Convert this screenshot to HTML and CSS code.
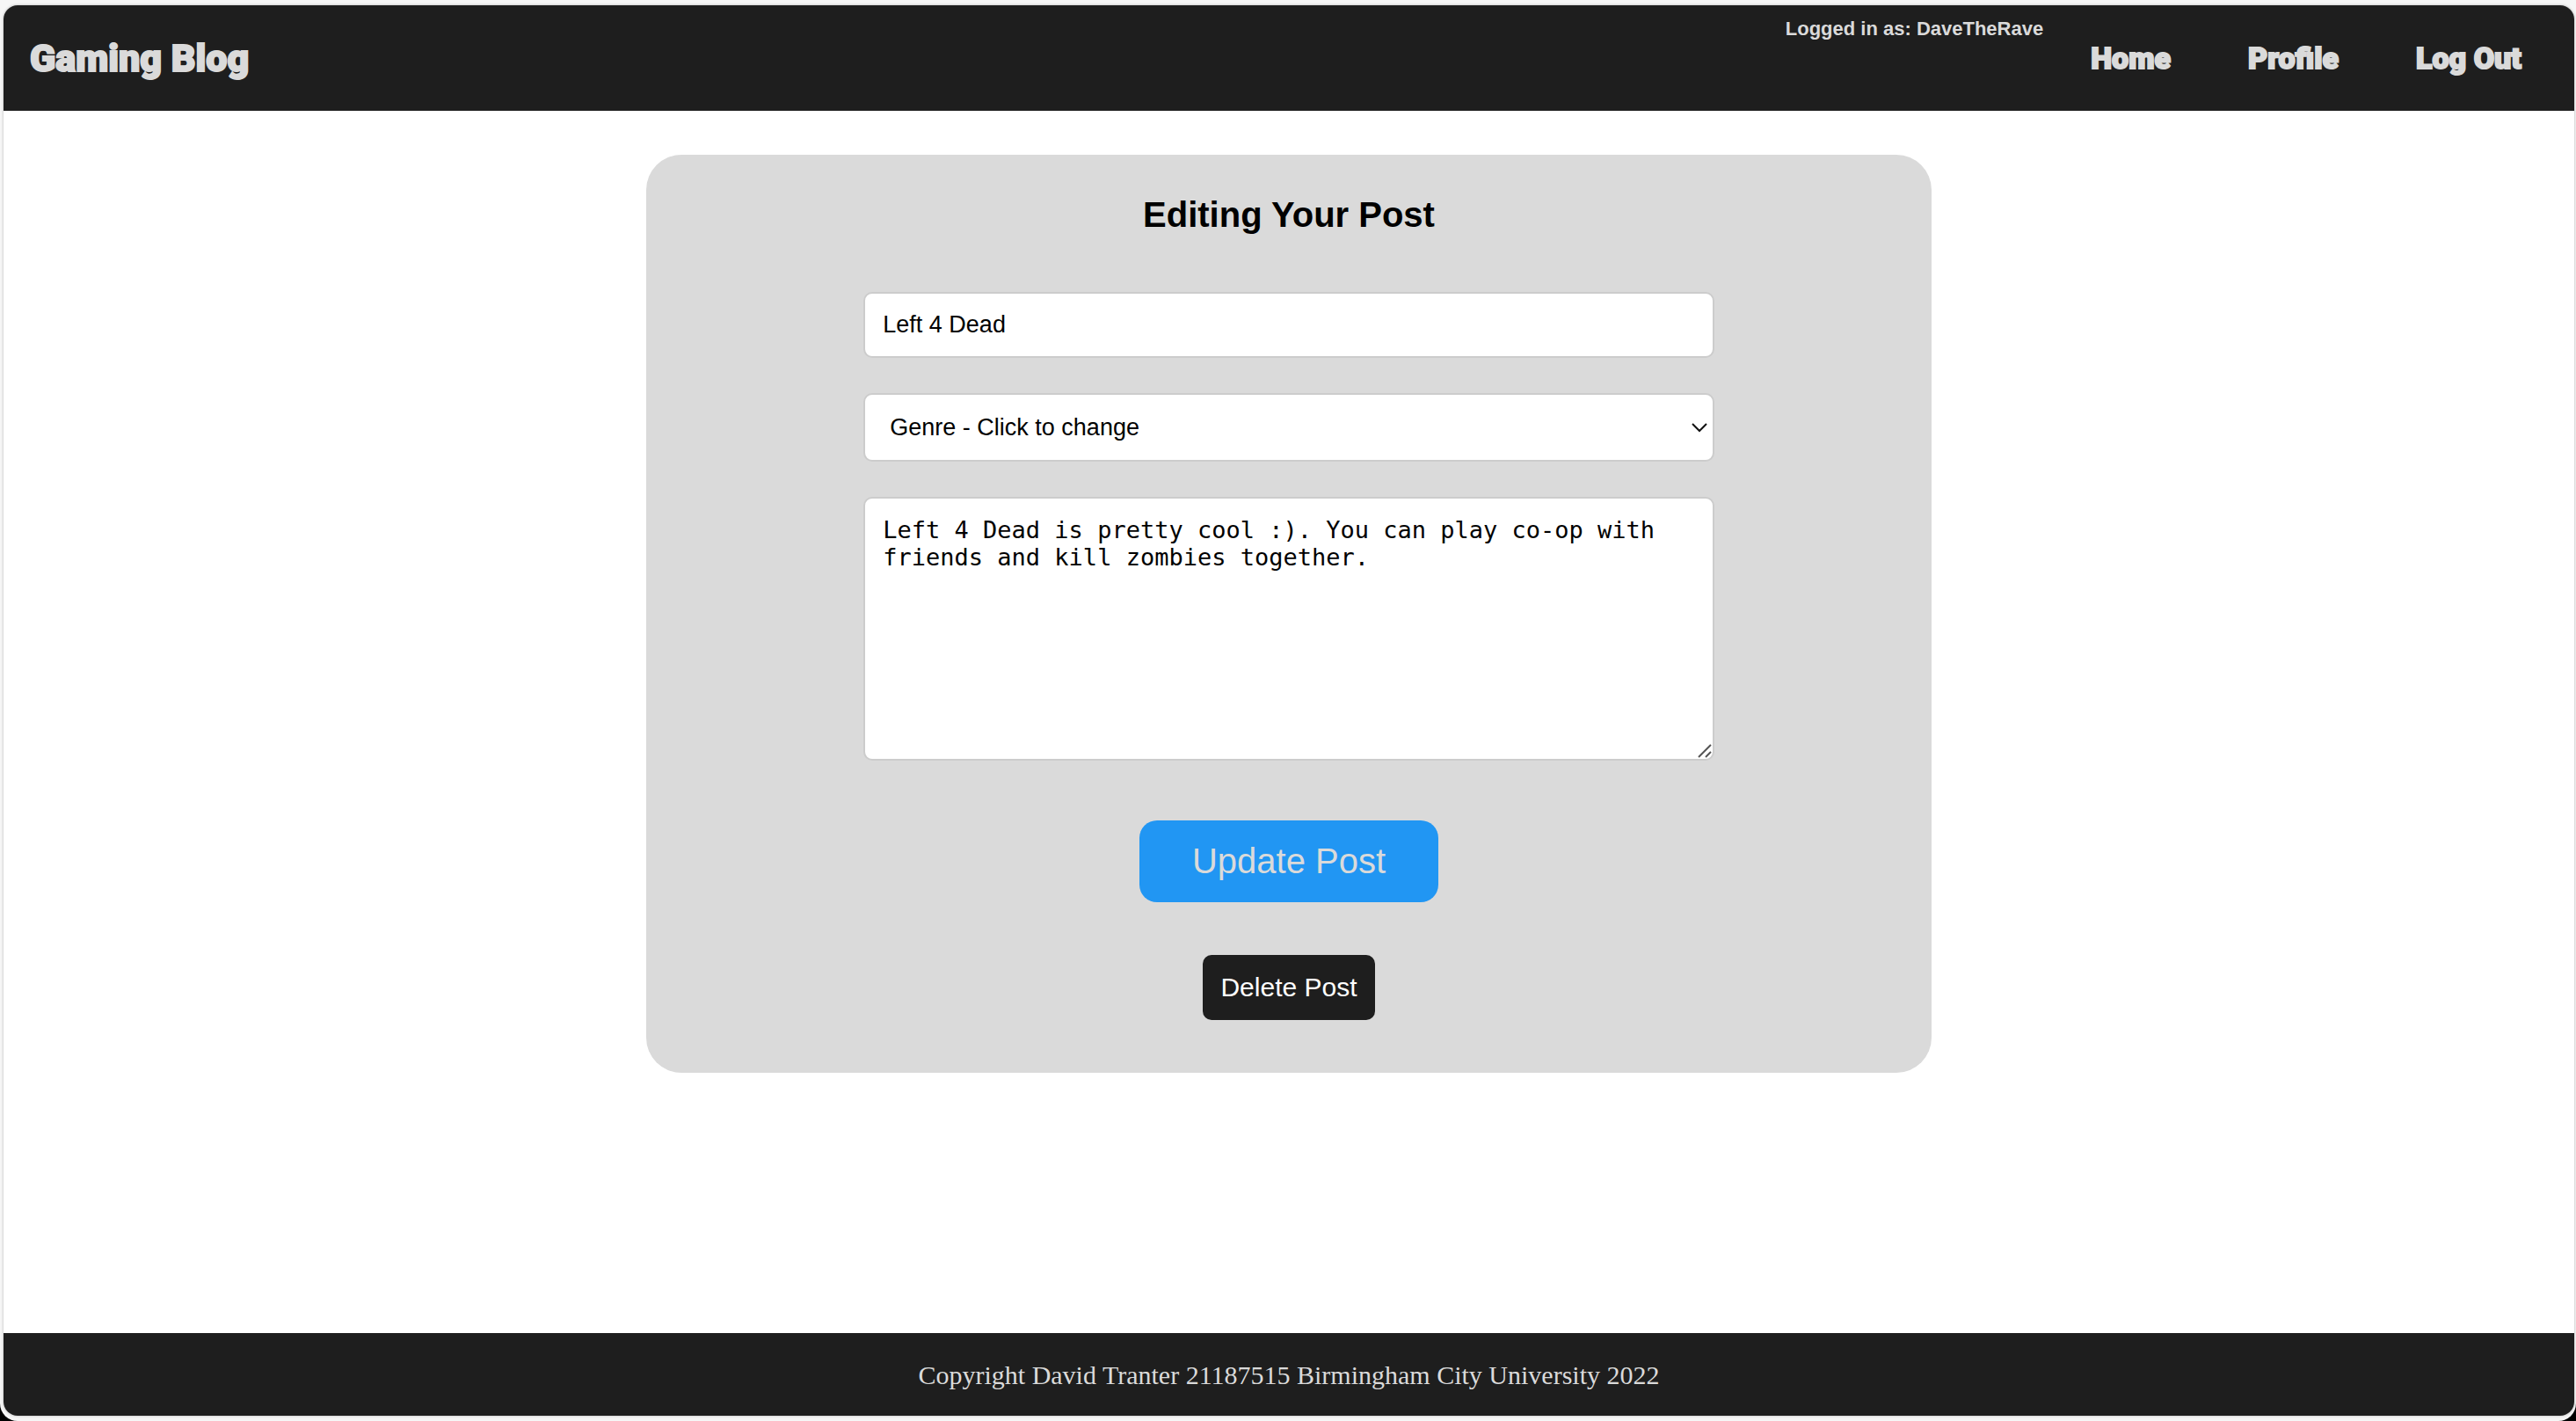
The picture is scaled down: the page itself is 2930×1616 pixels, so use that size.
FILE: index.html
```html
<!DOCTYPE html>
<html lang="en">
<head>
<meta charset="utf-8">
<title>Gaming Blog</title>
<link rel="stylesheet" href="styles.css">
</head>
<body>
<div class="frame">
  <div class="page">
    <header class="header">
      <a class="logo" href="#">Gaming Blog</a>
      <div class="account">
        <p class="status">Logged in as: DaveTheRave</p>
        <nav class="nav">
          <a href="#">Home</a>
          <a href="#">Profile</a>
          <a href="#">Log Out</a>
        </nav>
      </div>
    </header>
    <main class="main">
      <form class="card">
        <h1 class="title">Editing Your Post</h1>
        <input class="field" type="text" aria-label="Title" value="Left 4 Dead">
        <div class="control">
          <select class="field select" aria-label="Genre"><option>Genre - Click to change</option></select>
          <svg class="chevron" viewBox="0 0 18 12" aria-hidden="true"><path d="M1 2 L9 10 L17 2" fill="none" stroke="#111" stroke-width="2"/></svg>
        </div>
        <div class="control control-area">
          <textarea class="field area" aria-label="Post">Left 4 Dead is pretty cool :). You can play co-op with friends and kill zombies together.</textarea>
          <svg class="grip" viewBox="0 0 16 16" aria-hidden="true"><path d="M1 15 L15 1 M9 15 L15 9" fill="none" stroke="#555" stroke-width="2"/></svg>
        </div>
        <button class="update" type="submit">Update Post</button>
        <button class="delete" type="button">Delete Post</button>
      </form>
    </main>
    <footer class="footer">Copyright David Tranter 21187515 Birmingham City University 2022</footer>
  </div>
</div>
</body>
</html>
```
FILE: styles.css
```css
* { box-sizing: border-box; }
html { background: #000; }
body { margin: 0; font-family: "Liberation Sans", Arial, sans-serif; }
.frame {
  min-height: 100vh;
  padding: 6px 2px 6px 4px;
  background: #f6f6f6;
  border-radius: 0 0 20px 20px;
  display: flex;
}
.page {
  flex: 1;
  display: flex;
  flex-direction: column;
  background: #fff;
  border-radius: 16px;
  overflow: hidden;
  box-shadow: 0 0 3px rgba(0, 0, 0, 0.3);
}
.header {
  height: 120px;
  padding: 0 60px 0 30px;
  background: #1e1e1e;
  color: #dadada;
  display: flex;
  justify-content: space-between;
}
.logo, .nav a {
  color: inherit;
  text-decoration: none;
  font-family: Impact, Roboto, sans-serif;
  font-weight: 900;
  -webkit-text-stroke: 2px #dadada;
}
.logo { font-size: 43px; line-height: 120px; }
.account { display: flex; gap: 54px; }
.status { margin: 0; padding-top: 14px; font-size: 22px; line-height: 26px; font-weight: bold; }
.nav { display: flex; gap: 88px; font-size: 34px; line-height: 120px; }
.main { flex: 1; padding: 50px 0; }
.card {
  width: 50%;
  margin: 0 auto;
  padding: 40px 40px 60px;
  background: #dadada;
  border-radius: 40px;
  display: flex;
  flex-direction: column;
  align-items: center;
}
.title {
  margin: 0 0 60px;
  font-size: 40px;
  line-height: 56px;
}
.field {
  width: 70%;
  height: 75px;
  margin: 0 0 40px;
  padding: 0 20px;
  border: 2px solid #ccc;
  border-radius: 10px;
  background: #fff;
  color: #000;
  font-family: inherit;
  font-size: 27px;
}
.control { width: 70%; margin-bottom: 40px; display: grid; align-items: center; }
.control > * { grid-area: 1 / 1; }
.control .field { width: 100%; margin: 0; }
.control-area { margin-bottom: 68px; }
.select { height: 78px; padding: 0 28px; appearance: none; }
.chevron { width: 18px; height: 12px; margin-right: 8px; justify-self: end; pointer-events: none; }
.area {
  height: 300px;
  padding: 20px;
  font-family: "DejaVu Sans Mono", monospace;
  line-height: 31px;
  resize: none;
}
.grip { width: 16px; height: 16px; margin: 0 3px 3px 0; place-self: end; pointer-events: none; }
.update, .delete { border: 0; font-family: inherit; }
.update {
  margin-bottom: 60px;
  padding: 0 60px;
  background: #2196f3;
  color: #dadada;
  border-radius: 20px;
  font-size: 40px;
  line-height: 93px;
}
.delete {
  padding: 0 20px;
  background: #1e1e1e;
  color: #fff;
  border-radius: 10px;
  font-size: 30px;
  line-height: 74px;
}
.footer {
  padding-top: 2px;
  background: #1e1e1e;
  color: #dadada;
  text-align: center;
  font-family: "Liberation Serif", "Times New Roman", serif;
  font-size: 30px;
  line-height: 92px;
}
```
